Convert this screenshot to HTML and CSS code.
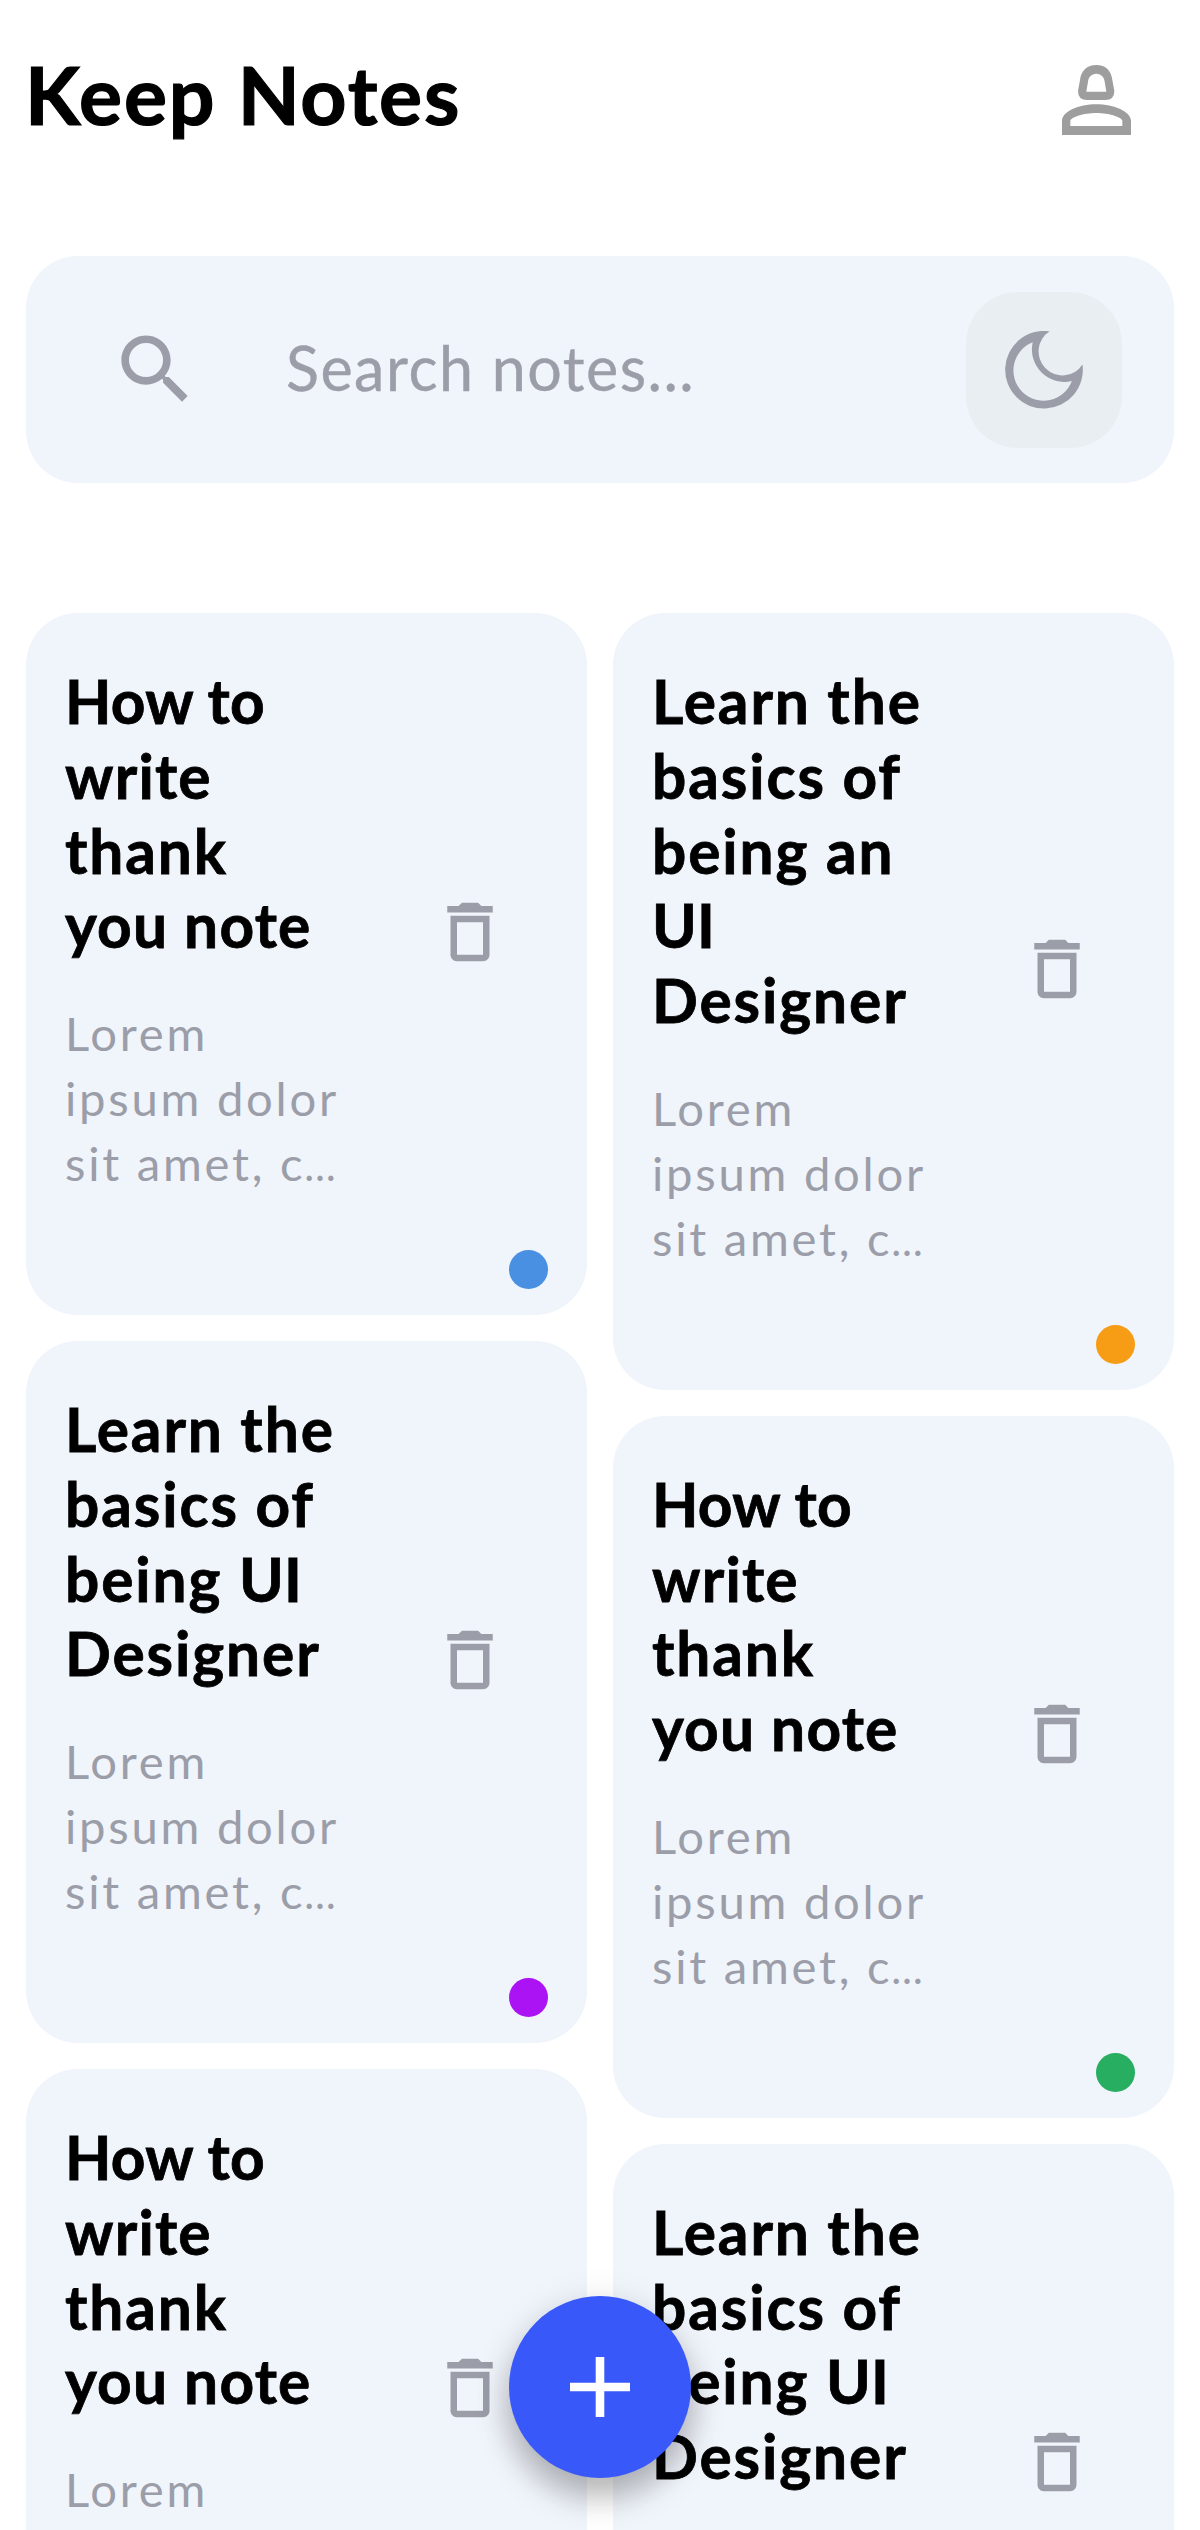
FILE: index.html
```
<!DOCTYPE html>
<html lang="en">
<head>
<meta charset="utf-8">
<title>Keep Notes</title>
<link rel="stylesheet" href="styles.css">
</head>
<body>
<svg class="sprite" aria-hidden="true">
  <symbol id="trash" viewBox="0 0 24 24"><path d="M6 19c0 1.100.9 2 2 2h8c1.100 0 2-.9 2-2V7H6v12zM8 9h8v10H8V9zm7.500-5l-1-1h-5l-1 1H5v2h14V4h-3.500z"/></symbol>
</svg>
<div class="app">
  <header class="header">
    <h1 class="title">Keep Notes</h1>
    <svg class="user" viewBox="65 45 207 210" fill-rule="evenodd"><path d="M168 45C196 45 213 62 216 90L222 123Q222 150 195 150H140Q113 150 113 123L119 90C122 62 140 45 168 45zM168 71C153 71 144 82 143 95L138 125H198L193 95C192 82 183 71 168 71zM65 255V213C65 185 115 163 168 163S272 185 272 213V255zM90 228V212C92 202 130 189 168 189S245 202 246 212V228z"/></svg>
  </header>
  <div class="search">
    <svg class="search-icon" viewBox="0 0 24 24"><path d="M15.500 14h-.79l-.28-.27C15.410 12.590 16 11.110 16 9.500 16 5.910 13.090 3 9.500 3S3 5.910 3 9.500 5.910 16 9.500 16c1.610 0 3.090-.59 4.230-1.570l.27.28v.79l5 4.990L20.490 19l-4.990-5zm-6 0C7.010 14 5 11.990 5 9.500S7.010 5 9.500 5 14 7.010 14 9.500 11.990 14 9.500 14z"/></svg>
    <span class="placeholder">Search notes...</span>
    <button class="theme"><svg class="moon" viewBox="195 182 234 235" fill-rule="evenodd"><path d="M329 183A117 117 0 1 0 428 283A72 72 0 1 1 329 183zM278 216A91 91 0 1 0 396 333A98 98 0 0 1 278 216z"/></svg></button>
  </div>
  <main class="notes">
    <div class="column">
      <article class="note">
        <div class="row"><div class="text"><h2 class="name"><span class="tight">How to</span><br><span class="snug">write</span><br>thank<br><span class="snug">you note</span></h2><p class="body">Lorem<br>ipsum dolor<br>sit amet, c<span class="dots">…</span></p></div><svg class="trash"><use href="#trash"/></svg></div>
        <span class="dot blue"></span>
      </article>
      <article class="note">
        <div class="row"><div class="text"><h2 class="name">Learn the<br>basics of<br>being <span class="tight">UI</span><br>Designer</h2><p class="body">Lorem<br>ipsum dolor<br>sit amet, c<span class="dots">…</span></p></div><svg class="trash"><use href="#trash"/></svg></div>
        <span class="dot purple"></span>
      </article>
      <article class="note">
        <div class="row"><div class="text"><h2 class="name"><span class="tight">How to</span><br><span class="snug">write</span><br>thank<br><span class="snug">you note</span></h2><p class="body">Lorem<br>&nbsp;<br>&nbsp;</p></div><svg class="trash"><use href="#trash"/></svg></div>
      </article>
    </div>
    <div class="column">
      <article class="note">
        <div class="row"><div class="text"><h2 class="name">Learn the<br>basics of<br>being an<br><span class="tight">UI</span><br>Designer</h2><p class="body">Lorem<br>ipsum dolor<br>sit amet, c<span class="dots">…</span></p></div><svg class="trash"><use href="#trash"/></svg></div>
        <span class="dot orange"></span>
      </article>
      <article class="note">
        <div class="row"><div class="text"><h2 class="name"><span class="tight">How to</span><br><span class="snug">write</span><br>thank<br><span class="snug">you note</span></h2><p class="body">Lorem<br>ipsum dolor<br>sit amet, c<span class="dots">…</span></p></div><svg class="trash"><use href="#trash"/></svg></div>
        <span class="dot green"></span>
      </article>
      <article class="note">
        <div class="row"><div class="text"><h2 class="name">Learn the<br>basics of<br>being <span class="tight">UI</span><br>Designer</h2><p class="body">&nbsp;<br>&nbsp;<br>&nbsp;</p></div><svg class="trash"><use href="#trash"/></svg></div>
      </article>
    </div>
  </main>
  <button class="fab"><svg class="plus" viewBox="0 0 60 60"><path d="M25.700 0h8.600v25.700H60v8.600H34.300V60h-8.600V34.300H0v-8.600h25.700z"/></svg></button>
</div>
</body>
</html>
```
FILE: styles.css
```
* { box-sizing: border-box; margin: 0; }
body { background: #fff; font-family: Lato, "Open Sans", sans-serif; color: #000; }
button { border: 0; padding: 0; }
svg { display: block; flex: none; }
.sprite { display: none; }
.app { position: relative; width: 1200px; height: 2530px; overflow: hidden; padding: 45px 26px 0; }

.header { display: flex; align-items: center; justify-content: space-between; height: 97px; padding-right: 43px; }
.title { font-size: 80.6px; line-height: 97px; font-weight: 700; letter-spacing: 1.8px; margin-left: -1px; -webkit-text-stroke: 1.2px #000; }
.user { width: 69px; height: 70px; margin-top: 13px; fill: #9e9e9e; }

.search { display: flex; align-items: center; height: 227px; margin-top: 114px; padding: 0 52px 0 84px; border-radius: 52px; background: #f0f4fb; }
.search-icon { width: 91px; height: 91px; fill: #9b9ea8; }
.placeholder { flex: 1; margin: 0 0 4px 85px; font-size: 61px; line-height: 73px; letter-spacing: 1.5px; color: #9b9ea8; -webkit-text-stroke: .4px #9b9ea8; }
.theme { display: flex; align-items: center; justify-content: center; width: 156px; height: 156px; border-radius: 52px; background: #e9eef2; }
.moon { width: 78px; height: 78px; fill: #9b9ea8; }

.notes { display: flex; gap: 26px; margin-top: 130px; }
.column { flex: 1; display: flex; flex-direction: column; gap: 26px; }
.note { display: flex; flex-direction: column; padding: 39px 39px 26px; border-radius: 52px; background: #f0f4fb; }
.row { display: flex; align-items: center; justify-content: space-between; padding: 12px 39px 17px 0; }
.text { white-space: nowrap; }
.name { font-size: 60.4px; line-height: 74.75px; font-weight: 700; letter-spacing: 1.9px; -webkit-text-stroke: .8px #000; }
.tight { letter-spacing: .2px; }
.snug { letter-spacing: 1.2px; }
.body { margin-top: 37px; font-size: 47.2px; line-height: 65px; letter-spacing: 2.75px; color: #9b9ea8; }
.dots { font-size: 42px; line-height: 1; letter-spacing: 0; margin-left: -1px; }
.trash { width: 78px; height: 78px; margin-top: 4px; fill: #9b9ea8; }
.dot { align-self: flex-end; width: 39px; height: 39px; margin-top: 38px; border-radius: 50%; }
.blue { background: #4a90e2; }
.purple { background: #ac13f4; }
.orange { background: #f79d15; }
.green { background: #27ae60; }

.fab { position: absolute; left: 509px; bottom: 52px; display: flex; align-items: center; justify-content: center; width: 182px; height: 182px; border-radius: 50%; background: #3858f9; box-shadow: 0 20px 32px rgba(0, 0, 0, .26), 0 4px 40px rgba(0, 0, 0, .08); }
.plus { width: 60px; height: 60px; fill: #fff; }
```
